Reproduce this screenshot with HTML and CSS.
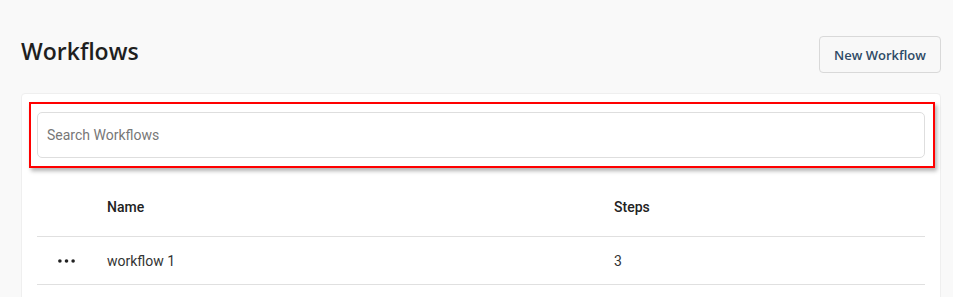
FILE: index.html
```html
<!DOCTYPE html>
<html lang="en">
<head>
<meta charset="utf-8">
<title>Workflows</title>
<link rel="stylesheet" href="styles.css">
</head>
<body>
<div class="page">
  <header class="page-header">
    <h1 class="page-title">Workflows</h1>
    <button class="btn-new" type="button">New Workflow</button>
  </header>
  <section class="card">
    <div class="search-area">
      <input class="search-input" type="text" placeholder="Search Workflows">
      <div class="highlight"></div>
    </div>
    <div class="table">
      <div class="row head">
        <div class="cell"></div>
        <div class="cell">Name</div>
        <div class="cell">Steps</div>
      </div>
      <div class="row body">
        <div class="cell actions">
          <svg class="dots" width="18" height="4" viewBox="0 0 18 4" aria-hidden="true">
            <circle cx="2" cy="2" r="1.9"/>
            <circle cx="9" cy="2" r="1.9"/>
            <circle cx="16" cy="2" r="1.9"/>
          </svg>
        </div>
        <div class="cell">workflow 1</div>
        <div class="cell">3</div>
      </div>
    </div>
  </section>
</div>
</body>
</html>
```
FILE: styles.css
```css
html, body {
  margin: 0;
  padding: 0;
  height: 100%;
  overflow: hidden;
}
body {
  background: #f9f9f9;
  font-family: "Roboto", "Liberation Sans", sans-serif;
  color: #222;
}
.page {
  padding: 36px 12px 0 21px;
}
.page-header {
  display: flex;
  justify-content: space-between;
  align-items: flex-start;
  height: 37px;
  margin-bottom: 20px;
}
.page-title {
  margin: -1px 0 0 0;
  font-family: "Open Sans", "Noto Sans", sans-serif;
  font-weight: 600;
  font-size: 23px;
  line-height: 32px;
  color: #1f1f1f;
}
.btn-new {
  width: 122px;
  height: 37px;
  padding: 0;
  background: #f8f8f8;
  border: 1px solid #d9d9d9;
  border-radius: 4px;
  font-family: "Open Sans", "Noto Sans", sans-serif;
  font-weight: 600;
  font-size: 13px;
  color: #2e4a66;
}
.card {
  background: #fff;
  border: 1px solid #efefef;
  border-radius: 4px;
  height: 300px;
  box-sizing: border-box;
}
.search-area {
  position: relative;
  padding: 18px 15px 20px;
}
.search-input {
  display: block;
  box-sizing: border-box;
  width: 100%;
  height: 46px;
  padding: 0 9px;
  border: 1px solid #dedede;
  border-radius: 5px;
  background: #fff;
  font-family: "Roboto", sans-serif;
  font-size: 14px;
  outline: none;
}
.search-input::placeholder {
  color: #777;
}
.highlight {
  position: absolute;
  left: 7px;
  top: 8px;
  right: 5px;
  bottom: 10px;
  border: 2px solid #f00;
  box-shadow: 2px 3px 4px rgba(0, 0, 0, 0.3);
  pointer-events: none;
}
.table {
  margin: 0 15px;
}
.row {
  display: grid;
  grid-template-columns: 70px 507px 1fr;
  align-items: center;
  border-bottom: 1px solid #e0e0e0;
  font-size: 14px;
}
.row.head {
  height: 58px;
  font-weight: 500;
  color: #222;
}
.row.body {
  height: 47px;
  color: #333;
}
.actions {
  padding-left: 21px;
  display: flex;
  align-items: center;
}
.dots {
  fill: #222;
  width: 17px;
  height: 4px;
}
```
